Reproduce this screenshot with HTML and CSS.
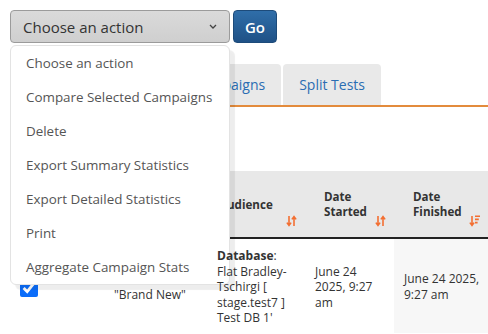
FILE: index.html
```html
<!DOCTYPE html>
<html>
<head>
    <meta charset="UTF-8">
    <title>Campaigns</title>
    <link rel="stylesheet" href="styles.css">
</head>
<body>
    <div class="page">
        <div class="actions">
            <div class="select">
                <span>Choose an action</span>
                <svg class="chevron" viewBox="0 0 8 5" width="8" height="5"><path d="M1 1l3 3 3-3" fill="none" stroke="#444" stroke-width="1.3"/></svg>
            </div>
            <button class="go">Go</button>

            <ul class="menu">
                <li>Choose an action</li>
                <li>Compare Selected Campaigns</li>
                <li>Delete</li>
                <li>Export Summary Statistics</li>
                <li>Export Detailed Statistics</li>
                <li>Print</li>
                <li>Aggregate Campaign Stats</li>
            </ul>
        </div>

        <ul class="tabs">
            <li class="tab">Mailings</li>
            <li class="tab">Campaigns</li>
            <li class="tab">Split Tests</li>
        </ul>

        <table class="grid">
            <colgroup>
                <col class="c-check">
                <col class="c-name">
                <col class="c-aud">
                <col class="c-start">
                <col class="c-finish">
            </colgroup>
            <thead>
                <tr>
                    <th></th>
                    <th>Name</th>
                    <th class="aud">Audience
                        <svg class="sort" viewBox="0 0 11 12" width="11" height="12"><path d="M3 1v9.5M0.9 7.6L3 10.5l2.1-2.9M8 11V1.5M5.9 4.4L8 1.5l2.1 2.9" fill="none" stroke="#f36f32" stroke-width="1.6"/></svg>
                    </th>
                    <th>Date<br>Started
                        <svg class="sort" viewBox="0 0 11 12" width="11" height="12"><path d="M3 1v9.5M0.9 7.6L3 10.5l2.1-2.9M8 11V1.5M5.9 4.4L8 1.5l2.1 2.9" fill="none" stroke="#f36f32" stroke-width="1.6"/></svg>
                    </th>
                    <th>Date<br>Finished
                        <svg class="sort" viewBox="0 0 11 12" width="11" height="12"><path d="M3 1v9.5M0.9 7.6L3 10.5l2.1-2.9" fill="none" stroke="#f36f32" stroke-width="1.6"/><path d="M6 1.2h5M6 4.4h3.8M6 7.6h2.6" stroke="#f36f32" stroke-width="1.6"/></svg>
                    </th>
                </tr>
            </thead>
            <tbody>
                <tr>
                    <td><input type="checkbox" class="pick" checked></td>
                    <td class="name">Test Email<br>"Brand New"</td>
                    <td class="aud"><b>Database</b>:<br>Flat Bradley-Tschirgi [ stage.test7 ] Test DB 1'</td>
                    <td class="started">June 24 2025, 9:27 am</td>
                    <td class="sorted">June 24 2025, 9:27 am</td>
                </tr>
            </tbody>
        </table>
    </div>
</body>
</html>
```

FILE: styles.css
```css
html, body {
    margin: 0;
    overflow: hidden;
}

body {
    font-family: "Open Sans", "DejaVu Sans", sans-serif;
    color: #333;
    background-color: #fff;
}

.page {
    padding: 10px 0 0 10px;
}

.actions {
    position: relative;
    display: flex;
    gap: 3px;
}

.select {
    width: 220px;
    height: 33px;
    box-sizing: border-box;
    display: flex;
    align-items: center;
    justify-content: space-between;
    padding: 0 12px 0 12px;
    border: 1px solid #9b9b9b;
    border-radius: 4px;
    background: linear-gradient(#dadada, #cfcfcf);
    font-size: 15px;
    color: #333;
}

.go {
    width: 44px;
    height: 33px;
    padding: 0;
    border: 1px solid #1d4b7a;
    border-radius: 4px;
    background: linear-gradient(#2f6ea9, #1f5186);
    color: #fff;
    font-family: inherit;
    font-size: 15px;
    font-weight: 600;
}

.menu {
    position: absolute;
    left: 0;
    top: 35px;
    z-index: 5;
    width: 220px;
    box-sizing: border-box;
    margin: 0;
    padding: 0;
    list-style: none;
    background-color: #fff;
    border: 1px solid #e3e3e3;
    border-radius: 6px;
    box-shadow: 5px 5px 1px rgba(0,0,0,0.07);
}

.menu li {
    height: 34px;
    line-height: 34px;
    padding-left: 15px;
    font-size: 13.4px;
    color: #555;
    white-space: nowrap;
}

.tabs {
    display: flex;
    gap: 2px;
    margin: 21px 0 0 0;
    padding: 0 0 0 79px;
    list-style: none;
    border-bottom: 2px solid #e38b3c;
}

.tab {
    height: 41px;
    line-height: 41px;
    padding: 0 16px;
    background-color: #e9e9e9;
    border-radius: 4px 4px 0 0;
    color: #2a6db3;
    font-size: 14px;
}

.grid {
    margin-top: 64px;
    width: 478px;
    table-layout: fixed;
    border-collapse: collapse;
    font-size: 12px;
    line-height: 15.5px;
}

.c-check { width: 94px; }
.c-name { width: 103px; }
.c-aud { width: 98px; }
.c-start { width: 89px; }
.c-finish { width: 94px; }

.grid th {
    position: relative;
    height: 67px;
    padding: 0 22px 0 19px;
    box-sizing: border-box;
    background-color: #e8e8e8;
    border-bottom: 2px solid #222;
    text-align: left;
    vertical-align: middle;
    font-size: 11.6px;
    font-weight: 700;
    line-height: 15px;
}

.grid th.aud {
    padding-left: 12px;
}

.sort {
    position: absolute;
    right: 8px;
    bottom: 10px;
}

.grid td {
    padding: 9px 19px 7px 10px;
    vertical-align: middle;
    color: #333;
}

.grid td.aud {
    position: relative;
    z-index: 6;
    padding-right: 10px;
}

.grid td.name {
    padding-right: 10px;
    line-height: 16px;
}

.grid td.sorted {
    background-color: #f7f7f7;
    padding-right: 4px;
}

.pick {
    width: 18px;
    height: 18px;
    margin: 5px 0 0 0;
    accent-color: #0b6dfa;
}
```
